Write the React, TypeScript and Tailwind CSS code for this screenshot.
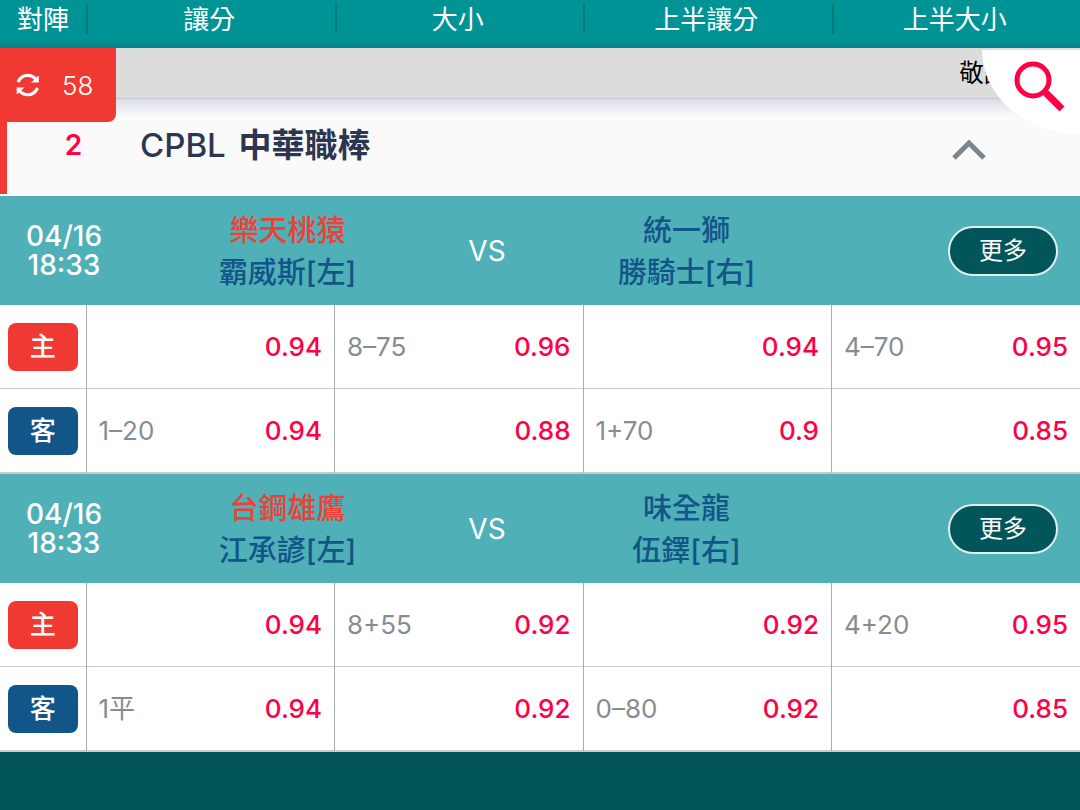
import React from "react";

type Odd = { line?: string; price: string };
type Match = {
  date: string;
  time: string;
  home: string;
  homePitcher: string;
  away: string;
  awayPitcher: string;
  homeOdds: Odd[];
  awayOdds: Odd[];
};

const columns = ["讓分", "大小", "上半讓分", "上半大小"];

const matches: Match[] = [
  {
    date: "04/16",
    time: "18:33",
    home: "樂天桃猿",
    homePitcher: "霸威斯[左]",
    away: "統一獅",
    awayPitcher: "勝騎士[右]",
    homeOdds: [{ price: "0.94" }, { line: "8–75", price: "0.96" }, { price: "0.94" }, { line: "4–70", price: "0.95" }],
    awayOdds: [{ line: "1–20", price: "0.94" }, { price: "0.88" }, { line: "1+70", price: "0.9" }, { price: "0.85" }],
  },
  {
    date: "04/16",
    time: "18:33",
    home: "台鋼雄鷹",
    homePitcher: "江承諺[左]",
    away: "味全龍",
    awayPitcher: "伍鐸[右]",
    homeOdds: [{ price: "0.94" }, { line: "8+55", price: "0.92" }, { price: "0.92" }, { line: "4+20", price: "0.95" }],
    awayOdds: [{ line: "1平", price: "0.94" }, { price: "0.92" }, { line: "0–80", price: "0.92" }, { price: "0.85" }],
  },
];

function RefreshIcon() {
  return (
    <svg viewBox="0 0 24 24" className="size-6 shrink-0" fill="none" aria-hidden="true">
      <path d="M2 9C4 4.600 7.500 2.300 11.500 2.300c4 0 6.500 1.500 8.500 4M21.500 15c-2 4.400-5.500 6.700-9.500 6.700-4 0-6.500-1.500-8.500-4" stroke="#fff" strokeWidth="3.200" />
      <path d="M22.800 2.500v7H15zM.7 21.500v-7h7.800z" fill="#fff" />
    </svg>
  );
}

function SearchIcon() {
  return (
    <svg viewBox="0 0 52 52" className="size-[52px] shrink-0" fill="none" stroke="#ff0046" aria-hidden="true">
      <circle cx="19" cy="19" r="16" strokeWidth="5" />
      <path d="M30 30l3 3" strokeWidth="5" />
      <path d="M32 32L48 48" strokeWidth="7" />
    </svg>
  );
}

function OddsRow({ label, badge, odds }: { label: string; badge: string; odds: Odd[] }) {
  return (
    <tr className="border-b border-[#c9cbce]">
      <th scope="row" className="p-0">
        <span className={`mx-auto flex h-12 w-[70px] items-center justify-center rounded-lg text-[26px] font-medium text-white ${badge}`}>
          {label}
        </span>
      </th>
      {odds.map((odd, i) => (
        <td key={i} className="border-l border-[#a9adb3] p-0">
          <button type="button" className="flex h-[83px] w-full items-center justify-between px-3">
            <span className="text-[26px] text-[#868c92]">{odd.line}</span>
            <span className="text-[26px] font-medium text-[#ff0046]">{odd.price}</span>
          </button>
        </td>
      ))}
    </tr>
  );
}

function MatchBlock({ match }: { match: Match }) {
  return (
    <section className="border-b border-[#c9cbce]">
      <div className="flex h-[109px] items-center bg-[#4fb0b8] text-white">
        <div className="w-32 text-center text-[28px] leading-[29px] font-medium">
          <div>{match.date}</div>
          <div>{match.time}</div>
        </div>
        <div className="flex-1 pt-0.5 text-center text-[29px] leading-[42px] font-medium text-[#125588]">
          <div className="text-[#ee4136]">{match.home}</div>
          <div>{match.homePitcher}</div>
        </div>
        <div className="w-20 text-center text-[28px]">VS</div>
        <div className="flex-1 pt-0.5 text-center text-[29px] leading-[42px] font-medium text-[#125588]">
          <div>{match.away}</div>
          <div>{match.awayPitcher}</div>
        </div>
        <div className="flex w-[234px] justify-end pr-[22px]">
          <button type="button" className="h-[50px] w-[110px] rounded-full border-2 border-[#e3eeee] bg-[#025659] text-[24px]">
            更多
          </button>
        </div>
      </div>
      <table className="w-full table-fixed border-collapse" aria-label={match.home}>
        <colgroup>
          <col className="w-[86px]" />
          <col />
          <col />
          <col />
          <col />
        </colgroup>
        <tbody>
          <OddsRow label="主" badge="bg-[#ef3932]" odds={match.homeOdds} />
          <OddsRow label="客" badge="bg-[#125588]" odds={match.awayOdds} />
        </tbody>
      </table>
    </section>
  );
}

export default function App() {
  return (
    <div className="min-h-screen bg-[#025659] font-['Inter','Noto_Sans_CJK_TC',sans-serif]">
      <header className="flex h-12 items-start bg-linear-to-b from-[#009396] from-80% to-[#008389] text-[26px] text-white">
        <div className="w-[86px] text-center leading-10">對陣</div>
        {columns.map((name) => (
          <div key={name} className="flex flex-1 pt-1">
            <span className="h-[30px] w-0.5 bg-[#05797e]" />
            <span className="-mt-1 flex-1 pr-1 text-center leading-10">{name}</span>
          </div>
        ))}
      </header>

      <div className="relative bg-[#fafafa]">
        <div className="flex h-[51px] justify-end border-b border-[#c4c8d6] bg-[#dcdcdc] pr-[71px] text-[25px] leading-[50px] text-black">
          敬請
        </div>
        <div className="flex h-[97px] bg-linear-to-b from-[#dadde6] to-[#fafafa] to-18%">
          <div className="h-[95px] w-[7px] bg-[#ef3932]" />
          <button type="button" className="flex flex-1 items-center pr-[94px] text-left text-[#2c3650]">
            <span className="w-[133px] pb-1.5 text-center text-[28px] leading-[88px] font-semibold text-[#ff0046]">2</span>
            <span className="flex-1 pb-1.5 text-[33px] leading-[88px] font-medium">
              <span className="mr-1">CPBL</span> <span className="font-bold">中華職棒</span>
            </span>
            <svg viewBox="0 0 34 22" className="mt-1 h-[22px] w-[34px]" fill="none" stroke="#7c848c" strokeWidth="5" aria-hidden="true">
              <path d="M2 19L17 4l15 15" />
            </svg>
          </button>
        </div>
        <button type="button" aria-label="更新" className="absolute top-0 left-0 flex h-[74px] w-[116px] items-center gap-[22px] rounded-br-lg bg-[#ef3932] pl-4 text-[26px] font-light text-white">
          <RefreshIcon />
          <span>58</span>
        </button>
        <button type="button" aria-label="搜尋" className="absolute top-0.5 right-0 flex h-[84px] w-[98px] items-start rounded-bl-[98px_84px] bg-white pt-[11px] pl-8">
          <SearchIcon />
        </button>
      </div>

      <main className="bg-white">
        {matches.map((match) => (
          <MatchBlock key={match.home} match={match} />
        ))}
      </main>
    </div>
  );
}
